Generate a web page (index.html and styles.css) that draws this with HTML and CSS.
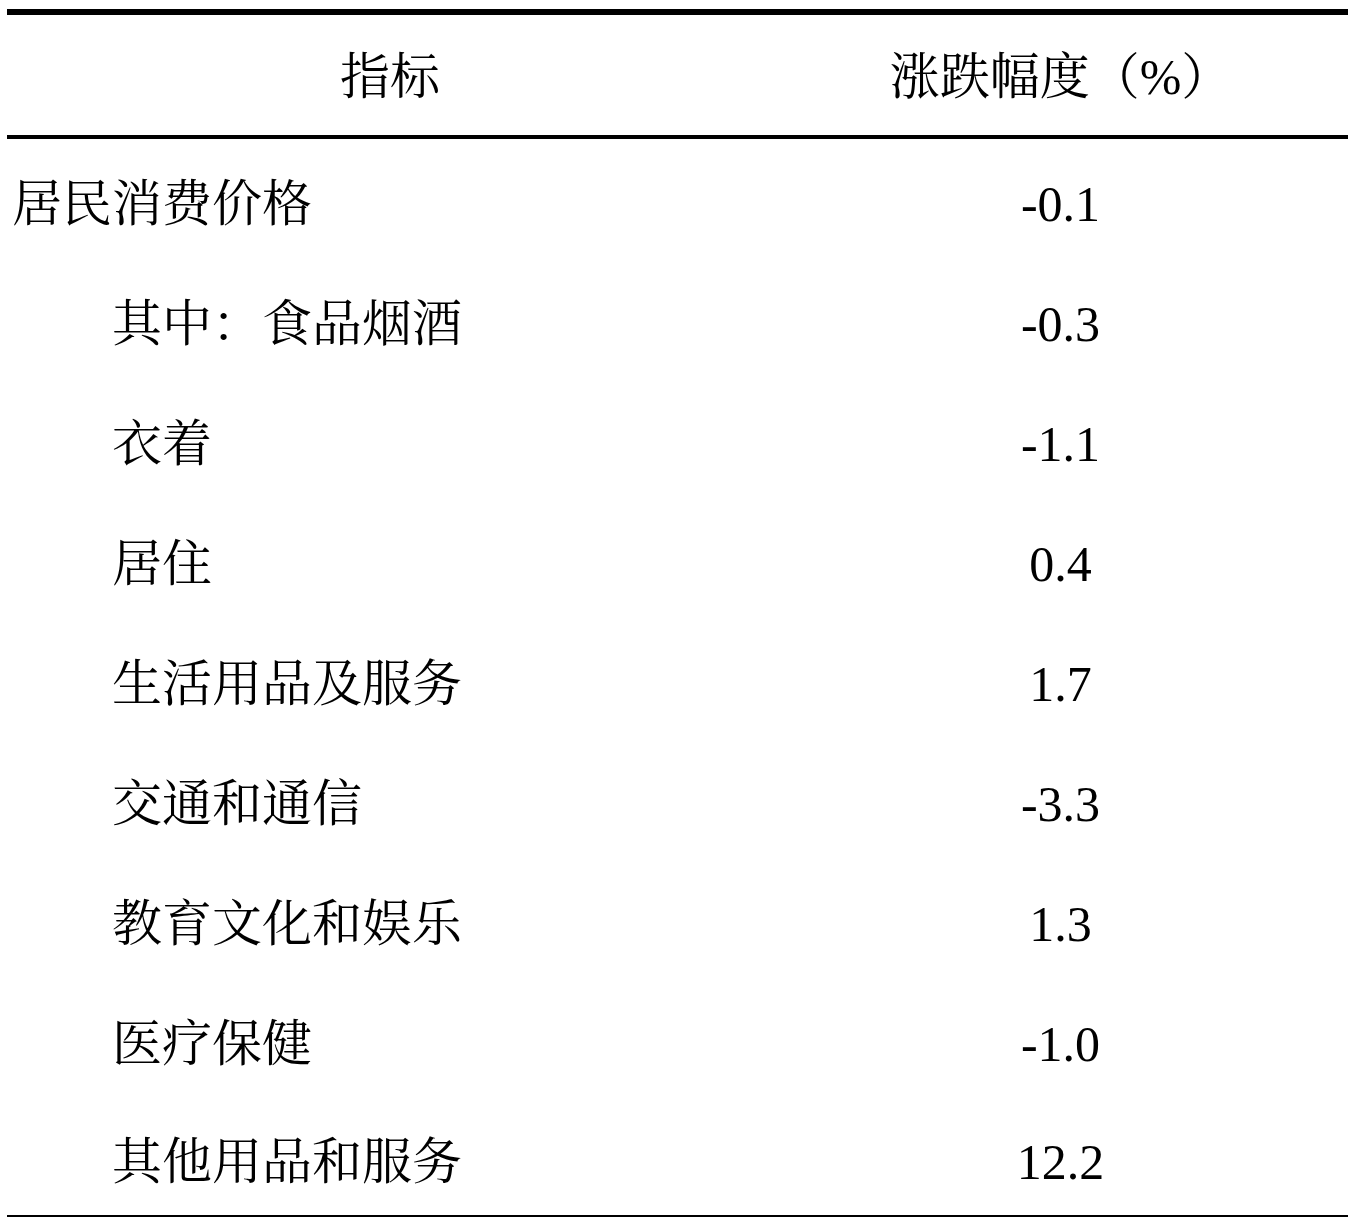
FILE: index.html
```html
<!DOCTYPE html>
<html lang="zh-CN">
<head>
<meta charset="utf-8">
<title>居民消费价格</title>
<link rel="stylesheet" href="styles.css">
</head>
<body>
<div class="page">
<table class="stats">
  <thead>
    <tr><th class="name">指标</th><th class="val">涨跌幅度（%）</th></tr>
  </thead>
  <tbody>
    <tr><td class="name">居民消费价格</td><td class="val">-0.1</td></tr>
    <tr><td class="name sub">其中：食品烟酒</td><td class="val">-0.3</td></tr>
    <tr><td class="name sub">衣着</td><td class="val">-1.1</td></tr>
    <tr><td class="name sub">居住</td><td class="val">0.4</td></tr>
    <tr><td class="name sub">生活用品及服务</td><td class="val">1.7</td></tr>
    <tr><td class="name sub">交通和通信</td><td class="val">-3.3</td></tr>
    <tr><td class="name sub">教育文化和娱乐</td><td class="val">1.3</td></tr>
    <tr><td class="name sub">医疗保健</td><td class="val">-1.0</td></tr>
    <tr class="last"><td class="name sub">其他用品和服务</td><td class="val">12.2</td></tr>
  </tbody>
</table>
</div>
</body>
</html>
```

FILE: styles.css
```css
html, body {
  margin: 0;
  padding: 0;
  background: #fff;
}
.page {
  padding: 9px 0 0 7px;
}
.stats {
  width: 1341px;
  border-collapse: collapse;
  font-family: "Liberation Serif", "Noto Serif CJK SC", "Noto Sans CJK SC", serif;
  font-size: 50px;
  color: #000;
}
.stats th, .stats td {
  padding: 0;
  font-weight: normal;
  line-height: 1;
  vertical-align: middle;
}
.stats th {
  height: 116px;
  padding-top: 4px;
}
.stats thead tr {
  border-top: 6px solid #000;
  border-bottom: 4px solid #000;
}
.stats th.name {
  width: 766px;
  text-align: center;
}
.stats th.val {
  text-align: center;
}
.stats td {
  height: 111px;
  padding-top: 9px;
}
.stats td.name {
  text-align: left;
  padding-left: 5px;
}
.stats td.name.sub {
  padding-left: 105px;
}
.stats td.val {
  text-align: center;
}
.stats tr.last td {
  height: 107px;
}
.stats tr.last {
  border-bottom: 2px solid #000;
}
```
